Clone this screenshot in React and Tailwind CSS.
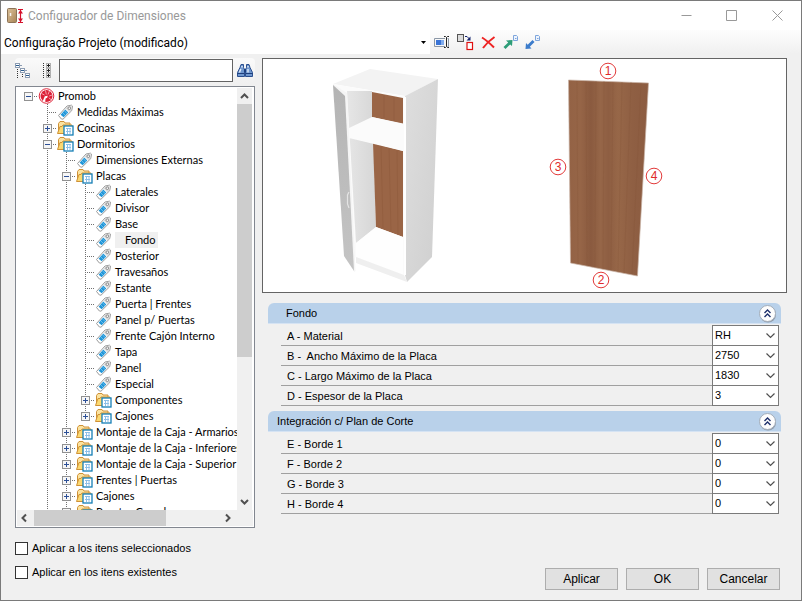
import React from "react";

const tree = [
  { level: 0, label: "Promob", icon: "logo", state: "open" },
  { level: 1, label: "Medidas Máximas", icon: "tag" },
  { level: 1, label: "Cocinas", icon: "folder", state: "closed" },
  { level: 1, label: "Dormitorios", icon: "folder", state: "open" },
  { level: 2, label: "Dimensiones Externas", icon: "tag" },
  { level: 2, label: "Placas", icon: "folder", state: "open" },
  { level: 3, label: "Laterales", icon: "tag" },
  { level: 3, label: "Divisor", icon: "tag" },
  { level: 3, label: "Base", icon: "tag" },
  { level: 3, label: "Fondo", icon: "tag", selected: true },
  { level: 3, label: "Posterior", icon: "tag" },
  { level: 3, label: "Travesaños", icon: "tag" },
  { level: 3, label: "Estante", icon: "tag" },
  { level: 3, label: "Puerta | Frentes", icon: "tag" },
  { level: 3, label: "Panel p/ Puertas", icon: "tag" },
  { level: 3, label: "Frente Cajón Interno", icon: "tag" },
  { level: 3, label: "Tapa", icon: "tag" },
  { level: 3, label: "Panel", icon: "tag" },
  { level: 3, label: "Especial", icon: "tag" },
  { level: 3, label: "Componentes", icon: "folder", state: "closed" },
  { level: 3, label: "Cajones", icon: "folder", state: "closed", last: true },
  { level: 2, label: "Montaje de la Caja - Armarios", icon: "folder", state: "closed" },
  { level: 2, label: "Montaje de la Caja - Inferiores", icon: "folder", state: "closed" },
  { level: 2, label: "Montaje de la Caja - Superior", icon: "folder", state: "closed" },
  { level: 2, label: "Frentes | Puertas", icon: "folder", state: "closed" },
  { level: 2, label: "Cajones", icon: "folder", state: "closed" },
  { level: 2, label: "Puertas Canada", icon: "folder", state: "closed" },
];

const sections = [
  {
    title: "Fondo",
    indent: true,
    fields: [
      { id: "a", label: "A - Material", value: "RH" },
      { id: "b", label: "B -  Ancho Máximo de la Placa", value: "2750" },
      { id: "c", label: "C - Largo Máximo de la Placa", value: "1830" },
      { id: "d", label: "D - Espesor de la Placa", value: "3" },
    ],
  },
  {
    title: "Integración c/ Plan de Corte",
    fields: [
      { id: "e", label: "E - Borde 1", value: "0" },
      { id: "f", label: "F - Borde 2", value: "0" },
      { id: "g", label: "G - Borde 3", value: "0" },
      { id: "h", label: "H - Borde 4", value: "0" },
    ],
  },
];

const AppIcon = () => (
  <svg width="18" height="18" viewBox="0 0 18 18">
    <defs>
      <linearGradient id="door" x1="0" x2="1" y1="0" y2="1">
        <stop offset="0" stopColor="#dcc29a" />
        <stop offset="1" stopColor="#a88456" />
      </linearGradient>
    </defs>
    <rect x="0.5" y="1.5" width="9" height="14" rx="1" fill="url(#door)" stroke="#8c7356" />
    <path d="M3.5 6v3" stroke="#f4f4f4" strokeWidth="1.5" />
    <path d="M11 2.5h5M11 15.5h5M13.5 3v12" stroke="#d4102a" strokeWidth="1.2" />
    <path d="M11 6.5l2.5-3.5 2.5 3.5zM11 11.5l2.5 3.5 2.5-3.5z" fill="#d4102a" />
  </svg>
);

const LogoIcon = () => (
  <svg width="17" height="16" viewBox="0 0 17 16">
    <circle cx="8.5" cy="8" r="7.3" fill="#fff" stroke="#e0283c" />
    <circle cx="8.5" cy="8" r="6" fill="#dc2238" />
    <path d="M6.8 8.2l3-.4-.6 2-1.600.800-.500 3.600-2.300-1.200z" fill="#fff" />
    <path
      d="M8.300 6.500L7.500 2.500M10 6.500l1.500-3.600M11.200 8l3-1M10.800 9.800l2.500 2M6.500 7L3.500 5.500"
      stroke="#f9c3ca"
      strokeWidth="0.800"
    />
  </svg>
);

const TagIcon = () => (
  <svg width="17" height="16" viewBox="0 0 17 16">
    <path d="M1.500 11.500L10 2l4.500-.8 1 .9-.8 4.600L6 15.200 4.400 15z" fill="#fff" stroke="#9a9a9a" />
    <path d="M10.500 2.500l3.800-.9.5.6-.8 4.200-1.800 1.800-3.600-3.600z" fill="#dadada" />
    <path d="M8.300 5.600l3 2.800-4.600 4.800-3.100-2.500z" fill="#2196d8" />
    <path d="M7.400 6.800L10 9.400M5.700 8.800l2.600 2.600" stroke="#8fd0f2" strokeWidth="0.7" />
    <circle cx="12.300" cy="4.200" r="1.300" fill="#fff" stroke="#888" />
  </svg>
);

const FolderIcon = () => (
  <svg width="17" height="16" viewBox="0 0 17 16">
    <path d="M1.500 12.500v-9l1.500-2h4l1 1.500h5v2" fill="#fbe3a0" stroke="#cf9136" />
    <path d="M.5 13.500l2.500-7h2l1-1.500h9l-1 8.500z" fill="#fbd972" stroke="#cf9136" />
    <rect x="7" y="6" width="9" height="9" fill="#fff" stroke="#157fb5" strokeWidth="1.300" />
    <path d="M9 8.500h5M9 11.500h5M10.500 8v6M13 8v6" stroke="#8cbfe8" />
  </svg>
);

const BinocularsIcon = () => (
  <svg width="16" height="15" viewBox="0 0 16 15">
    <path d="M4 1.500h2.500v3l1 2v7h-7v-4L3 4.500zM9.500 1.500H12l1 3 2.500 5v4h-7v-7l1-2z" fill="#6f97cf" stroke="#2b4f8f" />
    <path d="M3.800 6L2.500 9.500M5 3v1.500M11 6v3.500M11 3v1.500" stroke="#e4eefb" strokeWidth="1.400" />
    <path d="M.5 10.500h6.500M9 10.500h6.500" stroke="#1e3f7c" />
    <path d="M7 6h2v3H7z" fill="#1e3f7c" />
  </svg>
);

const CollapseTreeIcon = () => (
  <svg width="16" height="16" viewBox="0 0 16 16" shapeRendering="crispEdges" fill="none">
    <g stroke="#8d9db3">
      <path d="M.5.500h4v4h-4zM5.500 5.500h4v4h-4zM10.500 10.500h4v4h-4z" fill="#fff" />
      <path d="M5 2.500h2M10 7.500h2" />
    </g>
    <path d="M1 2.500h3M6 7.500h3M11 12.500h3" stroke="#2a5c8e" />
    <path d="M2.500 6v9M7.500 11v4" stroke="#333" strokeDasharray="1 1" />
  </svg>
);

const ExpandTreeIcon = () => (
  <svg width="10" height="16" viewBox="0 0 10 16" shapeRendering="crispEdges" fill="none">
    <path d="M1.500 0v16" stroke="#333" strokeDasharray="1 1" />
    <path d="M4.500.500h4v4h-4zM4.500 5.500h4v4h-4zM4.500 10.500h4v4h-4z" stroke="#b0b0b0" />
    <path d="M5 2.500h3M5 7.500h3M5 12.500h3M6.500 1v3M6.500 6v3M6.500 11v3" stroke="#222" />
  </svg>
);

const RenameIcon = () => (
  <svg width="16" height="12" viewBox="0 0 16 12" fill="none">
    <path d="M11 2.500H.5v8H11M13.500 10.500h1v-8h-1" stroke="#8b97a6" />
    <path d="M2 4h8v5H2z" fill="#7fabee" />
    <path d="M2 4h5v5H2z" fill="#3a74d6" />
    <path d="M10 .500h1.500l1 1 1-1H15M12.500 1.500v9M10 11.500h1.500l1-1 1 1H15" stroke="#222" />
  </svg>
);

const CopyIcon = () => (
  <svg width="17" height="17" viewBox="0 0 17 17" fill="none">
    <rect x="0.5" y="0.500" width="6" height="7" fill="#dcdcdc" stroke="#555" />
    <path d="M8 2.500h2l2.500 2.500" stroke="#14246e" />
    <path d="M13.500 2.500v4h-4z" fill="#14246e" />
    <rect x="10" y="8.500" width="5.500" height="7" fill="#fff" stroke="#e01010" strokeWidth="1.200" />
  </svg>
);

const DeleteIcon = () => (
  <svg width="15" height="13" viewBox="0 0 15 13" fill="none">
    <path d="M1 1.500c4 2.500 8 6 12 10M13.500 1C9 4 5 8 2 12" stroke="#ee2222" strokeWidth="2" />
  </svg>
);

const SheetIcon = () => (
  <g>
    <path d="M10.500.500h3l1 1v4h-4z" fill="#eef4fd" stroke="#7fa6dc" />
    <path d="M12 3.500h1.500" stroke="#7fa6dc" />
  </g>
);

const ExportIcon = () => (
  <svg width="15" height="15" viewBox="0 0 15 15">
    <path d="M3 5.500L9.500 5 9 11 7.200 9.400 2.500 14 .5 12 5.200 7.400z" fill="#2d9d78" />
    <SheetIcon />
  </svg>
);

const ImportIcon = () => (
  <svg width="15" height="15" viewBox="0 0 15 15">
    <path d="M.5 14L1 8l1.700 1.700L7.500 5l2 2-4.700 4.700L6.500 13.500z" fill="#3c7ccb" />
    <SheetIcon />
  </svg>
);

const icons = { logo: LogoIcon, tag: TagIcon, folder: FolderIcon };

// one 19px wide column of the dotted guide lines
const Guide = ({ kind }) => (
  <svg
    className="shrink-0"
    width="19"
    height="16"
    viewBox="0 0 19 16"
    shapeRendering="crispEdges"
    fill="none"
  >
    {kind !== "blank" && kind !== "root" && (
      <path d={kind === "end" ? "M9.500 0v8" : "M9.500 0v16"} stroke="#707070" strokeDasharray="1 1" />
    )}
    {(kind === "tee" || kind === "end" || kind === "root") && (
      <path d="M9 8.500h10" stroke="#707070" strokeDasharray="1 1" />
    )}
  </svg>
);

const Expander = ({ kind, open }) => (
  <button type="button" aria-label={open ? "Contraer" : "Expandir"} className="relative shrink-0">
    <Guide kind={kind} />
    <svg
      className="absolute left-[5px] top-1"
      width="9"
      height="9"
      viewBox="0 0 9 9"
      shapeRendering="crispEdges"
    >
      <rect x="0.5" y="0.5" width="8" height="8" fill="#f6f6f6" stroke="#919191" />
      <path d={open ? "M2 4.500h5" : "M2 4.500h5M4.500 2v5"} stroke="#2c4f96" />
    </svg>
  </button>
);

const TreeRow = ({ node }) => {
  const Icon = icons[node.icon];
  const kind = node.level === 0 ? "root" : node.last ? "end" : "tee";
  const parents = Array.from({ length: node.level }, (_, i) => (i === 0 ? "blank" : "line"));
  return (
    <li className="flex h-4 items-center whitespace-nowrap">
      {parents.map((p, i) => (
        <Guide key={i} kind={p} />
      ))}
      {node.state ? <Expander kind={kind} open={node.state === "open"} /> : <Guide kind={kind} />}
      <span className="flex w-5 shrink-0 justify-start">
        <Icon />
      </span>
      <span
        className={
          node.selected
            ? "h-4 bg-[#f0f0f0] pl-2.5 pr-0.5 leading-4"
            : "h-4 leading-4"
        }
      >
        {node.label}
      </span>
    </li>
  );
};

const Arrow = ({ d }) => (
  <svg className="shrink-0" width="15" height="16" viewBox="0 0 15 16" fill="none">
    <path d={d} stroke="#505050" strokeWidth="2" />
  </svg>
);

const TreeView = () => (
  <div className="flex min-h-0 min-w-0 flex-1 flex-col border border-[#828790] bg-white p-px">
    <div className="flex min-h-0 flex-1">
      <ul className="min-w-0 flex-1 overflow-hidden pl-0.5 font-[Lato,sans-serif]">
        {tree.map((node, i) => (
          <TreeRow key={i} node={node} />
        ))}
      </ul>
      <div className="flex w-[15px] shrink-0 flex-col bg-[#f0f0f0]">
        <Arrow d="M4 10l3.500-3.500L11 10" />
        <div className="h-3/5 bg-[#cdcdcd]" />
        <div className="flex-1" />
        <Arrow d="M4 6l3.500 3.500L11 6" />
      </div>
      <div className="w-px" />
    </div>
    <div className="flex h-4 shrink-0 bg-[#f0f0f0]">
      <Arrow d="M9 4.500L5.500 8 9 11.500" />
      <div className="ml-0.5 w-[132px] bg-[#cdcdcd]" />
      <div className="flex-1" />
      <Arrow d="M6 4.500L9.500 8 6 11.500" />
      <div className="w-[18px]" />
    </div>
  </div>
);

const Marker = ({ x, y, n }) => (
  <g>
    <circle cx={x} cy={y} r="7.800" fill="#fff" stroke="#e23b3b" />
    <text x={x} y={y + 4} textAnchor="middle" fontSize="12" fill="#e02a2a">
      {n}
    </text>
  </g>
);

const Preview = () => (
  <div className="border border-[#646464] bg-white">
    <svg className="block h-[233px] w-full" viewBox="263 59 523 233">
      <defs>
        <linearGradient id="side" x1="0" x2="1" y1="0" y2="1">
          <stop offset="0" stopColor="#dedede" />
          <stop offset="1" stopColor="#cfcfcf" />
        </linearGradient>
        <linearGradient id="front" x1="0" x2="0" y1="0" y2="1">
          <stop offset="0" stopColor="#b4b4b4" />
          <stop offset="1" stopColor="#c4c4c4" />
        </linearGradient>
        <linearGradient id="inside" x1="0" x2="1" y1="0" y2="0">
          <stop offset="0" stopColor="#e6e6e6" />
          <stop offset="1" stopColor="#d6d6d6" />
        </linearGradient>
        <linearGradient id="wood" x1="0" x2="1" y1="0" y2="0">
          <stop offset="0" stopColor="#936245" />
          <stop offset="0.15" stopColor="#966547" />
          <stop offset="0.28" stopColor="#8a5a3f" />
          <stop offset="0.4" stopColor="#966648" />
          <stop offset="0.5" stopColor="#8e5e42" />
          <stop offset="0.62" stopColor="#976748" />
          <stop offset="0.8" stopColor="#8f5f43" />
          <stop offset="1" stopColor="#8c5c41" />
        </linearGradient>
      </defs>

      <path d="M333 84L370 69l68 10-33 17z" fill="#f3f3f3" />
      <path d="M405 96l33-17-6 178-25 25-2-7z" fill="url(#side)" />
      <path d="M333 84l72 12v179l-51-18-9-165z" fill="#fbfbfb" />
      <path d="M347 91h25l4 136-20 16z" fill="url(#inside)" />
      <path d="M372 92l31 6v26l-31-7z" fill="#9a6546" />
      <path d="M373 143l30 8v86l-27-10z" fill="#9a6546" />
      <path
        d="M381 145l2 83M389 147l2 85M397 149l1 86M384 95v23M394 97v24"
        stroke="#8a5537"
        strokeOpacity="0.400"
        fill="none"
      />
      <path d="M349 128l23-11 31 6.500V151l-54-13z" fill="#fbfbfb" />
      <path d="M356 243l20-16 27 10v38l-47-18z" fill="#fefefe" />
      <path d="M356 257l48 18 3 7-51-19z" fill="#efefef" />
      <path d="M333 84l14 9 8.500 178-1.500 1z" fill="#f5f5f5" />
      <path d="M333 85l12 11 9 175-10-15z" fill="url(#front)" />
      <path d="M349 192l-1.500 3v9l1.500 4" stroke="#e4e4e4" strokeWidth="1.200" fill="none" />
      <path d="M405 97v178" stroke="#fff" strokeWidth="2" />

      <path d="M568.500 80l80 3-11 193-67-13z" fill="url(#wood)" stroke="#c9b3a6" strokeWidth="0.700" />
      <path
        d="M577 81l1 183M586 81l1 184M596 81l-1 187M604 81l-1 188M613 82l-2 189M622 82l-4 190M631 82l-7 191M641 83l-9 191"
        stroke="#855439"
        strokeOpacity="0.250"
        fill="none"
      />
      <Marker x={608} y={71} n="1" />
      <Marker x={601} y={280} n="2" />
      <Marker x={558} y={167} n="3" />
      <Marker x={654} y={176} n="4" />
    </svg>
  </div>
);

const Field = ({ field }) => (
  <div className="flex h-5">
    <label
      htmlFor={field.id}
      className="flex-1 whitespace-pre border-b border-[#a0a0a0] pl-1.5 leading-5"
    >
      {field.label}
    </label>
    <div className="relative -mt-px h-[21px] w-[67px]">
      <select
        id={field.id}
        defaultValue={field.value}
        className="h-full w-full appearance-none border border-[#7a7a7a] bg-white pl-0.5"
      >
        <option>{field.value}</option>
      </select>
      <svg
        className="pointer-events-none absolute right-1 top-2"
        width="9"
        height="6"
        viewBox="0 0 9 6"
        fill="none"
      >
        <path d="M.5.500l4 4 4-4" stroke="#505050" strokeWidth="1.200" />
      </svg>
    </div>
  </div>
);

const Section = ({ section }) => (
  <section>
    <header className="flex h-[21px] items-center justify-between rounded-t-md border-b border-[#d5e3f3] bg-[#b9d1ea] pr-1">
      <h2 className={section.indent ? "pl-[18px]" : "pl-[9px]"}>{section.title}</h2>
      <button type="button" aria-label="Contraer sección">
        <svg width="19" height="19" viewBox="0 0 19 19" fill="none">
          <circle cx="10" cy="10.500" r="8" fill="#8d99a8" />
          <circle cx="9.500" cy="9.500" r="8" fill="#fdfdfd" stroke="#a3adb9" />
          <path d="M6.500 9l3-3 3 3M6.500 13l3-3 3 3" stroke="#1d2f6b" strokeWidth="1.400" />
        </svg>
      </button>
    </header>
    <div className="pl-[13px] pr-0.5 pt-0.5">
      {section.fields.map((field) => (
        <Field key={field.id} field={field} />
      ))}
    </div>
  </section>
);

const TitleBar = () => (
  <header className="flex h-[29px] items-center bg-white pl-1.5 font-[Roboto,sans-serif] text-[12px] text-[#999999]">
    <AppIcon />
    <h1 className="flex-1 pl-[3px]">Configurador de Dimensiones</h1>
    <button type="button" aria-label="Minimizar" className="flex h-full w-[45px] items-center justify-center">
      <svg width="11" height="11" viewBox="0 0 11 11">
        <path d="M.5 5.500h10" stroke="#999" />
      </svg>
    </button>
    <button type="button" aria-label="Maximizar" className="flex h-full w-[45px] items-center justify-center">
      <svg width="11" height="11" viewBox="0 0 11 11" fill="none">
        <path d="M.5.500h10v10H.5z" stroke="#999" />
      </svg>
    </button>
    <button type="button" aria-label="Cerrar" className="flex h-full w-[47px] items-center justify-center">
      <svg width="11" height="11" viewBox="0 0 11 11">
        <path d="M.5.500l10 10M10.500.500l-10 10" stroke="#999" />
      </svg>
    </button>
  </header>
);

const Toolbar = () => (
  <div className="flex h-6 items-center bg-linear-to-b from-[#fdfdfd] to-[#f0f0f0]">
    <div className="relative h-full w-[429px]">
      <select
        aria-label="Configuración"
        className="h-full w-full appearance-none bg-white pl-[3px] pt-0.5 font-[Roboto,sans-serif] text-[12px]"
      >
        <option>Configuração Projeto (modificado)</option>
      </select>
      <svg
        className="pointer-events-none absolute right-1 top-[11px]"
        width="5"
        height="3"
        viewBox="0 0 5 3"
      >
        <path d="M0 0h5L2.500 3z" fill="#000" />
      </svg>
    </div>
    <div className="flex items-center gap-[7px] pl-1">
      <button type="button" aria-label="Renombrar"><RenameIcon /></button>
      <button type="button" aria-label="Copiar"><CopyIcon /></button>
      <button type="button" aria-label="Eliminar"><DeleteIcon /></button>
      <button type="button" aria-label="Exportar"><ExportIcon /></button>
      <button type="button" aria-label="Importar"><ImportIcon /></button>
    </div>
  </div>
);

const Check = ({ id, label }) => (
  <div className="flex h-4 items-center gap-1">
    <input
      id={id}
      type="checkbox"
      className="h-[13px] w-[13px] appearance-none border border-[#333333] bg-white"
    />
    <label htmlFor={id}>{label}</label>
  </div>
);

const App = () => {
  return (
    <div className="flex h-screen flex-col border border-[#7a7a7a] bg-[#f0f0f0] font-['Liberation_Sans',Arial,sans-serif] text-[11px] text-black">
      <TitleBar />
      <Toolbar />
      <main className="flex min-h-0 flex-1 pr-3.5 pt-1">
        <div className="flex w-[254px] shrink-0 flex-col pb-5 pl-3.5">
          <div className="flex h-[25px] items-center rounded-sm bg-linear-to-b from-[#fafafa] to-[#f0f0f0]">
            <button type="button" aria-label="Contraer todo" className="w-[27px]">
              <CollapseTreeIcon />
            </button>
            <button type="button" aria-label="Expandir todo" className="w-[17px]">
              <ExpandTreeIcon />
            </button>
            <input
              type="text"
              aria-label="Buscar"
              className="h-[23px] min-w-0 flex-1 border border-[#646464] bg-white px-1"
            />
            <button type="button" aria-label="Encontrar" className="pl-1 pr-0.5">
              <BinocularsIcon />
            </button>
          </div>
          <div className="mt-[3px] flex min-h-0 flex-1">
            <TreeView />
          </div>
          <div className="flex flex-col gap-2 pt-3">
            <Check id="selected" label="Aplicar a los itens seleccionados" />
            <Check id="existing" label="Aplicar en los itens existentes" />
          </div>
        </div>

        <div className="flex min-w-0 flex-1 flex-col pb-2.5 pl-[7px]">
          <Preview />
          <div className="flex flex-col gap-[5px] px-1.5 pt-2.5">
            {sections.map((section) => (
              <Section key={section.title} section={section} />
            ))}
          </div>
          <div className="mt-auto flex justify-end gap-2 pr-[7px]">
            {["Aplicar", "OK", "Cancelar"].map((name) => (
              <button
                key={name}
                type="button"
                className="h-[22px] w-[73px] border border-[#adadad] bg-[#e1e1e1] text-[12px]"
              >
                {name}
              </button>
            ))}
          </div>
        </div>
      </main>
    </div>
  );
};

export default App;
